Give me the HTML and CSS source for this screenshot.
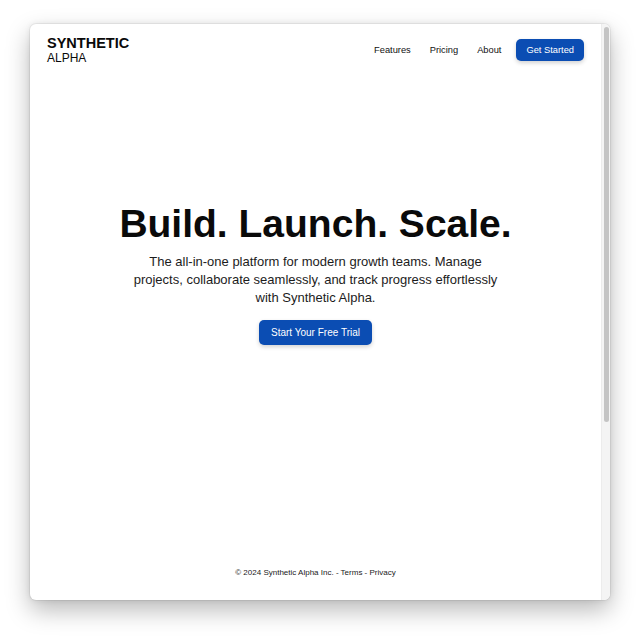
FILE: index.html
```html
<!DOCTYPE html>
<html lang="en">
<head>
<meta charset="utf-8">
<title>Synthetic Alpha</title>
<link rel="stylesheet" href="styles.css">
</head>
<body>
<div class="stage">
  <div class="window">
    <div class="content">
      <header class="header">
        <div class="logo">
          <div class="logo-top">SYNTHETIC</div>
          <div class="logo-bottom">ALPHA</div>
        </div>
        <nav class="nav">
          <a class="nav-link" href="#">Features</a>
          <a class="nav-link" href="#">Pricing</a>
          <a class="nav-link" href="#">About</a>
          <a class="btn btn-small" href="#">Get Started</a>
        </nav>
      </header>
      <main class="main">
        <h1 class="headline">Build. Launch. Scale.</h1>
        <p class="lead">The all-in-one platform for modern growth teams. Manage projects, collaborate seamlessly, and track progress effortlessly with Synthetic Alpha.</p>
        <a class="btn btn-cta" href="#">Start Your Free Trial</a>
      </main>
      <footer class="footer">© 2024 Synthetic Alpha Inc. - Terms - Privacy</footer>
    </div>
    <div class="scrollbar"><div class="thumb"></div></div>
  </div>
</div>
</body>
</html>
```
FILE: styles.css
```css
html, body {
  margin: 0;
  padding: 0;
  background: #ffffff;
}
body {
  font-family: "Liberation Sans", Arial, Helvetica, sans-serif;
  color: #111;
}
.stage {
  padding: 24px 30px 40px 30px;
}
.window {
  width: 580px;
  height: 576px;
  background: #fff;
  border-radius: 6px;
  box-shadow: 0 10px 24px rgba(0,0,0,0.28), 0 0 6px rgba(0,0,0,0.08), 0 0 0 1px rgba(0,0,0,0.05);
  display: flex;
  overflow: hidden;
}
.content {
  flex: 1;
  display: flex;
  flex-direction: column;
}
.header {
  display: flex;
  justify-content: space-between;
  align-items: center;
  padding: 12px 17px;
}
.logo-top {
  font-weight: 700;
  font-size: 14.5px;
  line-height: 1;
  color: #0a0a0a;
}
.logo-bottom {
  font-size: 12px;
  line-height: 1;
  margin-top: 1px;
  color: #0a0a0a;
}
.nav {
  display: flex;
  align-items: center;
}
.nav-link {
  font-size: 9.3px;
  color: #111;
  text-decoration: none;
  margin-right: 19px;
}
.nav-link:nth-child(3) {
  margin-right: 15px;
}
.btn {
  display: inline-block;
  background: #0b4db3;
  color: #fff;
  text-decoration: none;
  border-radius: 5px;
  box-shadow: 0 2px 4px rgba(0,0,0,0.18);
}
.btn-small {
  font-size: 9.3px;
  line-height: 12px;
  padding: 5px 10px;
}
.main {
  flex: 1;
  display: flex;
  flex-direction: column;
  align-items: center;
  padding-top: 126px;
}
.headline {
  margin: 0;
  font-size: 39px;
  line-height: 43px;
  font-weight: 700;
  color: #0a0a0a;
}
.lead {
  margin: 8px 0 0 0;
  max-width: 372px;
  text-align: center;
  font-size: 13px;
  line-height: 18px;
  color: #1c1c1c;
}
.btn-cta {
  margin-top: 13px;
  font-size: 10px;
  line-height: 13px;
  padding: 6px 12px;
}
.footer {
  text-align: center;
  font-size: 8px;
  line-height: 10px;
  color: #1a1a1a;
  padding: 0 0 22px 0;
}
.scrollbar {
  width: 9px;
  background: #f4f4f4;
  border-left: 1px solid #ececec;
  box-sizing: border-box;
  padding: 3px 1px 0 2px;
}
.thumb {
  height: 395px;
  background: #c4c4c4;
  border-radius: 3px;
}
```
